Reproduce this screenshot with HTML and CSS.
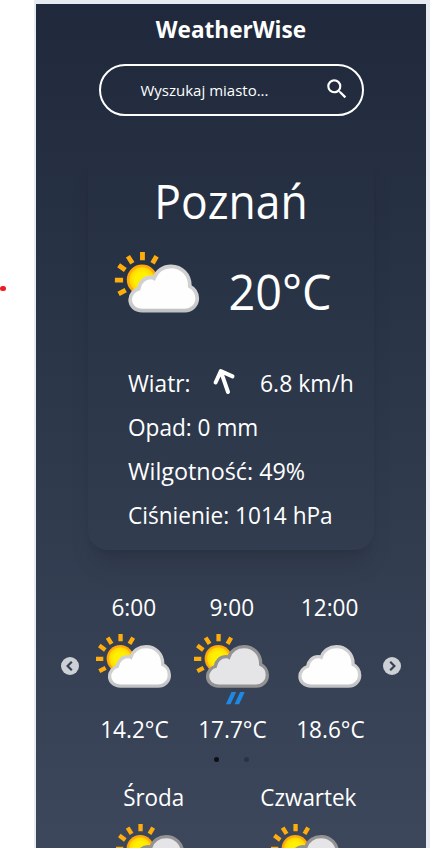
FILE: index.html
```html
<!DOCTYPE html>
<html lang="pl">
<head>
<meta charset="utf-8">
<title>WeatherWise</title>
<link rel="stylesheet" href="styles.css">
</head>
<body>
<svg class="defs" aria-hidden="true">
  <defs>
    <radialGradient id="sunfill"><stop offset="0.45" stop-color="#fff000"/><stop offset="0.78" stop-color="#ffd800"/><stop offset="0.85" stop-color="#ffad0a"/><stop offset="1" stop-color="#ffa50a"/></radialGradient>
    <linearGradient id="edge" x2="0" y2="1"><stop offset="0.75" stop-color="#d0d0d0"/><stop offset="1" stop-color="#bfc1c2"/></linearGradient>
    <symbol id="sun" viewBox="0 0 230 220">
      <circle cx="75" cy="77" r="41" fill="url(#sunfill)"/>
      <g stroke="#ffad0d" stroke-width="13">
        <path d="M76 3V25M37 14l12 19M114 14l-11 19M12 38l18 13M2 78h22M12 115l19-10"/>
      </g>
    </symbol>
    <symbol id="cloud" viewBox="0 0 230 220">
      <path stroke-width="10" d="M76 160C55 160 43 146 43 131C43 116 54 104 66 101C68 84 82 71 98 71C101 71 104 71 107 73C114 53 132 41 153 41C181 41 203 63 203 92V95C214 100 223 113 223 127C223 146 208 160 190 160Z"/>
    </symbol>
    <symbol id="rain" viewBox="0 0 230 220">
      <path d="M115 178h14l-17 37h-14zM141 178h14l-17 37h-14z" fill="#1e88e5"/>
    </symbol>
  </defs>
</svg>
<span class="marker"></span>
<main class="app">
  <h1 class="brand">WeatherWise</h1>
  <div class="search">
    <span class="placeholder">Wyszukaj miasto...</span>
    <svg class="search-icon" viewBox="0 0 24 24"><path fill="#fff" d="M15.5 14h-.79l-.28-.27A6.471 6.471 0 0 0 16 9.5 6.5 6.5 0 1 0 9.500 16c1.610 0 3.090-.59 4.230-1.570l.27.28v.79l5 4.990L20.490 19l-4.990-5zm-6 0C7.010 14 5 11.990 5 9.500S7.010 5 9.500 5 14 7.010 14 9.500 11.990 14 9.500 14z"/></svg>
  </div>
  <section class="card">
    <h2 class="city">Poznań</h2>
    <div class="now">
      <svg class="now-icon" viewBox="0 0 230 220"><use href="#sun"/><use href="#cloud" class="light"/></svg>
      <span class="now-temp">20°C</span>
    </div>
    <div class="facts">
      <div class="wind"><div class="wind-label"><span class="fact">Wiatr:</span></div>
        <svg class="wind-arrow" viewBox="0 0 24 28"><path d="M3.600 14.500L8.800 3.200L20.500 8.400M8.800 3.200L16 24" fill="none" stroke="#fff" stroke-width="4" stroke-linecap="round" stroke-linejoin="round"/></svg>
        <span class="fact wind-speed">6.8 km/h</span></div>
      <div><span class="fact">Opad: 0 mm</span></div>
      <div><span class="fact humidity">Wilgotność: 49%</span></div>
      <div><span class="fact">Ciśnienie: 1014 hPa</span></div>
    </div>
  </section>
  <section class="hours">
    <svg class="nav" viewBox="0 0 18 18"><circle cx="9" cy="9" r="9" fill="#cdd1d6"/><path d="M10.800 4.800L6.600 9l4.200 4.200" fill="none" stroke="#354154" stroke-width="2.200"/></svg>
    <div class="slides">
      <div class="hour"><span class="time">6:00</span><svg class="icon" viewBox="0 0 230 220"><use href="#sun"/><use href="#cloud" class="light"/></svg><span class="temp">14.2°C</span></div>
      <div class="hour"><span class="time">9:00</span><svg class="icon" viewBox="0 0 230 220"><use href="#sun"/><use href="#cloud" class="grey"/><use href="#rain"/></svg><span class="temp">17.7°C</span></div>
      <div class="hour"><span class="time">12:00</span><svg class="icon" viewBox="17 0 230 220"><use href="#cloud" class="light"/></svg><span class="temp">18.6°C</span></div>
    </div>
    <svg class="nav" viewBox="0 0 18 18"><circle cx="9" cy="9" r="9" fill="#cdd1d6"/><path d="M7.200 4.800L11.400 9l-4.200 4.200" fill="none" stroke="#354154" stroke-width="2.200"/></svg>
  </section>
  <div class="dots"><i class="dot active"></i><i class="dot"></i></div>
  <section class="days">
    <div class="day"><span class="day-name">Środa</span><svg class="day-icon" viewBox="0 0 230 220"><use href="#sun"/><use href="#cloud" class="grey"/></svg></div>
    <div class="day"><span class="day-name">Czwartek</span><svg class="day-icon" viewBox="0 0 230 220"><use href="#sun"/><use href="#cloud" class="grey"/></svg></div>
  </section>
</main>
</body>
</html>
```
FILE: styles.css
```css
* { box-sizing: border-box; }
html { height: 848px; overflow: hidden; }
body {
  margin: 0;
  width: 430px;
  height: 848px;
  overflow: hidden;
  background: linear-gradient(90deg, #fff 34px, #e6eaf1 34px);
  color: #fff;
  font: 400 24px/32px "Open Sans", "Noto Sans", sans-serif;
}
.defs { position: absolute; width: 0; height: 0; }
.marker {
  position: absolute;
  left: 0;
  top: 286px;
  width: 6px;
  height: 5px;
  border-radius: 3px;
  background: #ed1c24;
}
.app {
  width: 390px;
  height: 844px;
  margin: 4px 0 0 36px;
  overflow: hidden;
  background: linear-gradient(#1f293b, #3c475b);
  display: flex;
  flex-direction: column;
  align-items: center;
}
span { white-space: nowrap; }
.brand {
  margin: 9px 0 0;
  font-size: 24px;
  font-weight: 700;
  line-height: 32px;
  transform: scaleX(0.94);
}
.search {
  width: 265px;
  height: 52px;
  margin-top: 19px;
  padding: 0 12px 0 40px;
  flex: none;
  border: 2px solid #fff;
  border-radius: 26px;
  display: flex;
  align-items: center;
  justify-content: space-between;
}
.placeholder { font-size: 15px; }
.search-icon { width: 26px; height: 26px; margin-top: -3px; }
.card {
  width: 286px;
  height: 398px;
  margin-top: 36px;
  flex: none;
  border-radius: 20px;
  box-shadow: 0 20px 25px -5px rgba(0, 0, 0, 0.1), 0 8px 10px -6px rgba(0, 0, 0, 0.1);
  display: flex;
  flex-direction: column;
}
.city {
  margin: 19px 0 0;
  text-align: center;
  font-size: 48px;
  font-weight: 400;
  line-height: 60px;
  transform: scaleX(0.925);
}
.now { display: flex; align-items: flex-start; height: 76px; margin-top: 20px; padding-left: 26px; }
.now-icon { width: 86px; height: 82px; }
.now-temp { font-size: 49px; line-height: 60px; margin: 10px 0 0 26px; transform: scaleX(0.955); }
.facts { margin: 34px 0 0 40px; line-height: 44px; }
.fact { display: inline-block; transform: scaleX(0.942); transform-origin: left; }
.fact.humidity { transform: scaleX(0.972); }
.wind { display: flex; height: 44px; }
.wind-label { width: 84px; }
.wind-arrow { width: 24px; height: 28px; margin-top: 7px; }
.fact.wind-speed { margin-left: 24px; transform: scaleX(0.955); }
.hours { width: 340px; margin-top: 41px; display: flex; align-items: center; justify-content: space-between; }
.nav { width: 18px; height: 18px; flex: none; margin-top: -5px; }
.slides { width: 294px; display: flex; }
.hour { width: 98px; display: flex; flex-direction: column; align-items: center; }
.time, .temp { transform: translateX(1px) scaleX(0.94); }
.icon { width: 77px; height: 73px; margin: 10px 0 7px; }
.dots { display: flex; gap: 25px; margin-top: 12px; }
.dot { width: 5px; height: 5px; border-radius: 50%; background: #293345; }
.dot.active { background: #0c1017; }
.days { display: flex; width: 310px; margin-top: 19px; }
.day { width: 155px; flex: none; display: flex; flex-direction: column; align-items: center; }
.day-name { transform: scaleX(0.935); }
.day-icon { width: 77px; height: 73px; margin-top: 10px; }
.light { fill: #fefefe; stroke: url(#edge); }
.grey { fill: #e5e5e8; stroke: #939393; }
```
